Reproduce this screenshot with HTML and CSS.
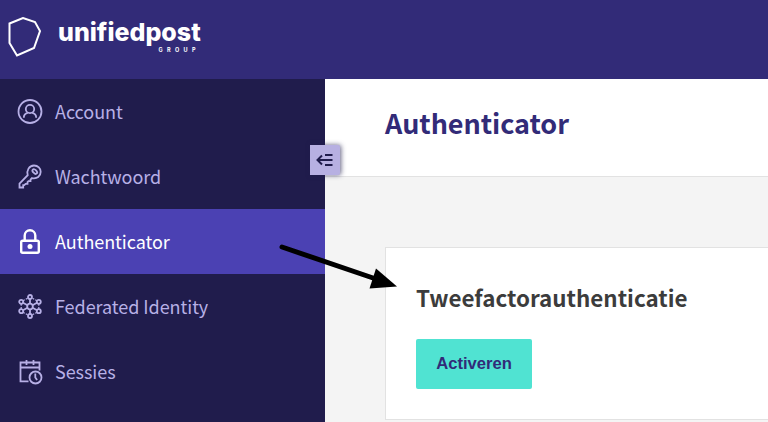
FILE: index.html
```
<!DOCTYPE html>
<html lang="nl">
<head>
    <meta charset="UTF-8">
    <meta name="viewport" content="width=device-width, initial-scale=1.0">
    <title>Authenticator</title>
    <link rel="stylesheet" href="styles.css">
</head>
<body>

    <header class="topbar">
        <svg class="logo-mark" width="34" height="42" viewBox="0 0 34 42">
            <path d="M1.500 6.500L15 1L27 5L32 14L26 31L9 38.500L1.500 26Z"/>
        </svg>
        <div class="logo">
            <span class="logo-name">unifiedpost</span>
            <span class="logo-group">GROUP</span>
        </div>
    </header>

    <div class="layout">
        <nav class="sidebar">
            <a class="nav-item" href="#">
                <svg class="icon" viewBox="0 0 26 26">
                    <circle cx="13" cy="12.500" r="11.500"/>
                    <circle cx="13" cy="10" r="4.200"/>
                    <path d="M6.800 18.700c0-2.700 1.600-4.300 4-4.800M19.200 18.700c0-2.700-1.600-4.300-4-4.800"/>
                </svg>
                <span>Account</span>
            </a>
            <a class="nav-item" href="#">
                <svg class="icon" viewBox="0 0 26 26">
                    <path d="M10.700 11.200C9.400 6.700 12 1.500 17 1.500c4 0 6.700 2.800 6.700 6.200 0 4.600-3.700 7.400-8.700 6.400l-1.500 1.500v1.600h-2l-1 1v1.600H8.700l-1.500 1.400h-1v2.300H2.500v-4z"/>
                    <ellipse cx="17.800" cy="7.500" rx="2.800" ry="1.700" transform="rotate(45 17.800 7.500)"/>
                </svg>
                <span>Wachtwoord</span>
            </a>
            <a class="nav-item active" href="#">
                <svg class="icon" viewBox="0 0 26 26">
                    <rect x="4.200" y="11.700" width="17.600" height="12" rx="1.500"/>
                    <path d="M7.700 11.500V6.500a5.300 5.300 0 0 1 10.600 0v5"/>
                    <circle class="solid" cx="13" cy="17.500" r="2.500"/>
                </svg>
                <span>Authenticator</span>
            </a>
            <a class="nav-item" href="#">
                <svg class="icon" viewBox="0 0 26 26">
                    <circle cx="13" cy="12.500" r="2.800"/>
                    <circle cx="13" cy="3" r="2"/>
                    <circle cx="13" cy="22" r="2"/>
                    <circle cx="4.200" cy="7.800" r="2"/>
                    <circle cx="21.800" cy="7.800" r="2"/>
                    <circle cx="4.200" cy="17.200" r="2"/>
                    <circle cx="21.800" cy="17.200" r="2"/>
                    <path d="M13 5v4.700M13 15.300V20M6 8.700l4.500 2.500M20 8.700l-4.500 2.500M6 16.300l4.500-2.500M20 16.300l-4.500-2.500"/>
                    <path class="links" d="M4.200 9.800v5.400M21.800 9.800v5.400M6 6.800L11.200 3.900M20 6.800L14.800 3.900M6 18.200l5.200 2.900M20 18.200l-5.200 2.900"/>
                </svg>
                <span>Federated Identity</span>
            </a>
            <a class="nav-item" href="#">
                <svg class="icon" viewBox="0 0 26 26">
                    <path d="M11.500 22.300H3.500V3.500h19v8M3.500 8.500h19M9.500 1v5M16.500 1v5"/>
                    <circle cx="18.500" cy="18.500" r="6"/>
                    <path d="M18.300 14.500v4l1.800 2.600"/>
                </svg>
                <span>Sessies</span>
            </a>
            <button class="collapse" aria-label="Menu inklappen">
                <svg width="18" height="14" viewBox="0 0 18 14">
                    <path d="M6 2.500L1.500 7 6 11.500M1.500 7H16.500M9 2h7.500M9 12h7.500"/>
                </svg>
            </button>
        </nav>

        <main class="content">
            <div class="page-header">
                <h1>Authenticator</h1>
            </div>
            <section class="card">
                <h2>Tweefactorauthenticatie</h2>
                <button class="btn">Activeren</button>
            </section>
        </main>
    </div>

    <svg class="pointer" width="120" height="56" viewBox="0 0 120 56">
        <path class="pointer-line" d="M4 7L98 39"/>
        <path d="M98 28.500L119 46.500L91.500 48.500Z"/>
    </svg>

</body>
</html>
```

FILE: styles.css
```
* {
    box-sizing: border-box;
}

body {
    margin: 0;
    height: 422px;
    overflow: hidden;
    position: relative;
    display: flex;
    flex-direction: column;
    font-family: "Noto Sans CJK SC", "Noto Sans", sans-serif;
    background-color: #f4f4f4;
}

.topbar {
    display: flex;
    align-items: flex-start;
    flex: none;
    height: 79px;
    padding: 17px 0 0 8px;
    gap: 16px;
    background-color: #322b78;
    color: white;
}

.logo-mark {
    fill: none;
    stroke: white;
    stroke-width: 2;
}

.logo {
    display: flex;
    flex-direction: column;
    width: 142px;
    padding-top: 1px;
    font-family: Inter, sans-serif;
}

.logo-name {
    font-size: 25px;
    font-weight: 800;
    line-height: 29px;
    letter-spacing: 0;
}

.logo-group {
    align-self: flex-end;
    font-size: 5.5px;
    font-weight: 700;
    line-height: 6px;
    letter-spacing: 4.4px;
}

.layout {
    display: flex;
    flex: 1;
}

.sidebar {
    position: relative;
    flex: none;
    width: 325px;
    background-color: #201c4c;
}

.nav-item {
    display: flex;
    align-items: center;
    height: 65px;
    padding-left: 17px;
    gap: 12px;
    color: #b7b0e6;
    font-size: 18px;
    line-height: 26px;
    text-decoration: none;
}

.nav-item span {
    padding-bottom: 2px;
    letter-spacing: -0.05px;
}

.nav-item.active {
    background-color: #4b41b3;
    color: white;
}

.icon {
    flex: none;
    width: 26px;
    height: 26px;
    fill: none;
    stroke: currentColor;
    stroke-width: 1.8;
}

.active .icon {
    stroke-width: 2.4;
}

.icon .solid {
    fill: currentColor;
    stroke: none;
}

.icon .links {
    stroke-dasharray: 2 1.2;
    stroke-width: 1.2;
}

.collapse {
    position: absolute;
    top: 66px;
    right: -15px;
    display: flex;
    align-items: center;
    justify-content: center;
    width: 30px;
    height: 30px;
    padding: 0;
    border: none;
    border-radius: 0 2px 2px 0;
    background-color: #b7b0e2;
    box-shadow: 1px 0 5px rgba(32, 28, 76, 0.7);
}

.collapse svg {
    fill: none;
    stroke: #201c4c;
    stroke-width: 2;
}

.content {
    flex: 1;
}

.page-header {
    height: 98px;
    padding: 24px 60px;
    border-bottom: 1px solid #e2e2e2;
    background-color: white;
}

.page-header h1 {
    margin: 0;
    color: #322b78;
    font-size: 27px;
    font-weight: 700;
    line-height: 40px;
    letter-spacing: -0.05px;
}

.card {
    height: 173px;
    margin: 70px 0 0 60px;
    padding: 32px 30px;
    border: 1px solid #e2e2e2;
    border-right: none;
    background-color: white;
}

.card h2 {
    margin: 0 0 25px;
    color: #3c3c3c;
    font-size: 22.4px;
    font-weight: 700;
    line-height: 34px;
}

.btn {
    display: block;
    width: 116px;
    height: 50px;
    padding: 0;
    border: none;
    border-radius: 2px;
    background-color: #50e3d2;
    color: #322b78;
    font-family: "Liberation Sans", Arial, sans-serif;
    font-size: 16.6px;
    font-weight: 700;
}

/* arrow laid over the page, from the menu to the card */
.pointer {
    position: absolute;
    top: 240px;
    left: 278px;
}

.pointer-line {
    stroke: black;
    stroke-width: 5;
    stroke-linecap: round;
}
```
